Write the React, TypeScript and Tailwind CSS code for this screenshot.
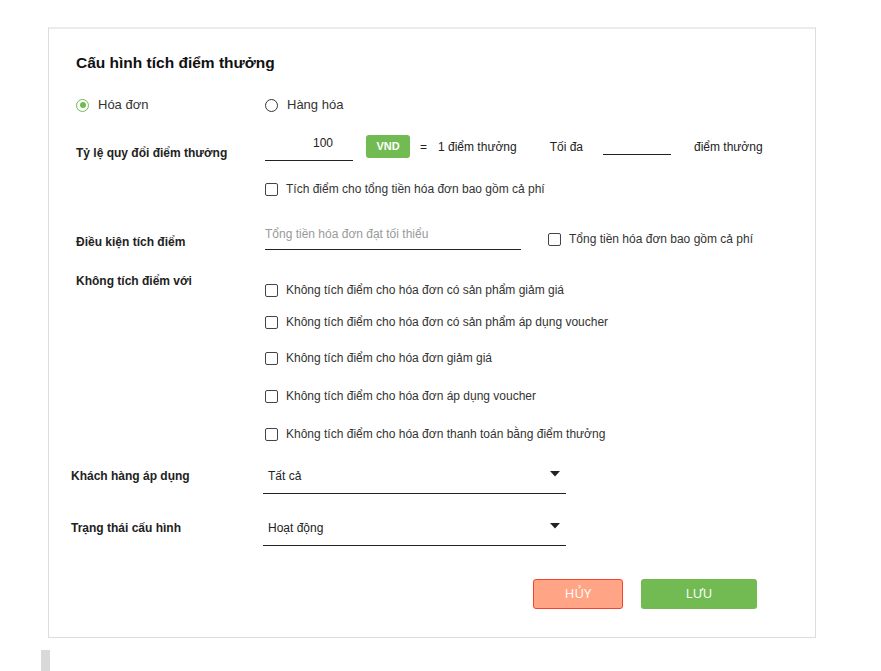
import React from "react";

const font = { fontFamily: '"Liberation Sans", Arial, sans-serif' };

function Radio({ checked, label }: { checked?: boolean; label: string }) {
  return (
    <div className="flex items-center h-5">
      <span
        className={
          "w-[13px] h-[13px] rounded-full border-[1.5px] flex items-center justify-center " +
          (checked ? "border-[#72bb53]" : "border-[#333]")
        }
      >
        {checked && <span className="w-[6px] h-[6px] rounded-full bg-[#72bb53]" />}
      </span>
      <span className="ml-[9px] text-[13px] text-[#333]">{label}</span>
    </div>
  );
}

function Check({ label, className = "" }: { label: string; className?: string }) {
  return (
    <div className={"flex items-center h-4 " + className}>
      <span className="w-[13px] h-[13px] rounded-[2px] border-[1.5px] border-[#444] shrink-0" />
      <span className="ml-2 text-[12px] text-[#333] leading-4">{label}</span>
    </div>
  );
}

function Caret() {
  return (
    <svg width="10" height="6" viewBox="0 0 10 6" className="mr-[6px] mt-[5px]">
      <polygon points="0,0 10,0 5,5.5" fill="#222" />
    </svg>
  );
}

function SelectRow({ label, value, className = "" }: { label: string; value: string; className?: string }) {
  return (
    <div className={"-ml-[5px] flex items-start " + className}>
      <div className="w-[192px] mt-[2px] text-[12px] font-bold text-[#222] leading-4">{label}</div>
      <div className="w-[303px] h-[28px] border-b border-[#222] flex items-start justify-between pl-[5px]">
        <span className="text-[12px] text-[#222] leading-4 mt-[2px]">{value}</span>
        <Caret />
      </div>
    </div>
  );
}

export default function App() {
  return (
    <div className="w-[881px] h-[671px] bg-white overflow-hidden" style={font}>
      <div className="ml-[48px] mt-[27px] w-[768px] h-[611px] border border-[#dcdcdc] border-t-2 border-t-[#ebebeb] flex flex-col pl-[27px]">
        <div className="mt-[24px] h-5 flex items-center text-[15.5px] font-bold text-[#111]">
          Cấu hình tích điểm thưởng
        </div>

        <div className="mt-[22px] flex">
          <div className="w-[189px]">
            <Radio checked label="Hóa đơn" />
          </div>
          <Radio label="Hàng hóa" />
        </div>

        <div className="mt-[20px] flex h-[26px] items-start">
          <div className="w-[189px] mt-[10px] text-[12px] font-bold text-[#222] leading-4">
            Tỷ lệ quy đổi điểm thưởng
          </div>
          <div className="w-[88px] h-[26px] border-b border-[#222] text-[12px] text-[#222] text-right pr-[20px] leading-4">
            100
          </div>
          <div className="ml-[13px] w-[44px] h-[23px] rounded-[3px] bg-[#72bb53] text-white text-[11px] font-bold flex items-center justify-center">
            VND
          </div>
          <div className="ml-[10px] mt-[4px] text-[12px] text-[#222] leading-4">=</div>
          <div className="ml-[11px] mt-[4px] text-[12px] text-[#222] leading-4">1 điểm thưởng</div>
          <div className="ml-[33px] mt-[4px] text-[12px] text-[#222] leading-4">Tối đa</div>
          <div className="ml-[20px] w-[68px] h-[20px] border-b border-[#222]" />
          <div className="ml-[23px] mt-[4px] text-[12px] text-[#222] leading-4">điểm thưởng</div>
        </div>

        <div className="mt-[20px] pl-[189px]">
          <Check label="Tích điểm cho tổng tiền hóa đơn bao gồm cả phí" />
        </div>

        <div className="mt-[28px] flex h-[26px] items-start">
          <div className="w-[189px] mt-[9px] text-[12px] font-bold text-[#222] leading-4">
            Điều kiện tích điểm
          </div>
          <div className="w-[256px] h-[25px] border-b border-[#222] text-[12px] text-[#9a9a9a] pt-[1px] leading-4">
            Tổng tiền hóa đơn đạt tối thiểu
          </div>
          <Check className="ml-[27px] mt-[6px]" label="Tổng tiền hóa đơn bao gồm cả phí" />
        </div>

        <div className="mt-[22px] flex">
          <div className="w-[189px] text-[12px] font-bold text-[#222] leading-4">
            Không tích điểm với
          </div>
          <div className="flex flex-col mt-[9px]">
            <Check label="Không tích điểm cho hóa đơn có sản phẩm giảm giá" />
            <Check className="mt-[16px]" label="Không tích điểm cho hóa đơn có sản phẩm áp dụng voucher" />
            <Check className="mt-[20px]" label="Không tích điểm cho hóa đơn giảm giá" />
            <Check className="mt-[22px]" label="Không tích điểm cho hóa đơn áp dụng voucher" />
            <Check className="mt-[22px]" label="Không tích điểm cho hóa đơn thanh toán bằng điểm thưởng" />
          </div>
        </div>

        <SelectRow className="mt-[24px]" label="Khách hàng áp dụng" value="Tất cả" />
        <SelectRow className="mt-[24px]" label="Trạng thái cấu hình" value="Hoạt động" />

        <div className="mt-[33px] flex pl-[457px] gap-[18px]" style={{ fontFamily: '"Open Sans", "Liberation Sans", sans-serif' }}>
          <div className="w-[90px] h-[30px] rounded-[3px] bg-[#ffa484] border border-[#f4442e] text-white text-[13px] flex items-center justify-center">
            HỦY
          </div>
          <div className="w-[116px] h-[30px] rounded-[3px] bg-[#72bb53] text-white text-[13px] flex items-center justify-center">
            LƯU
          </div>
        </div>
      </div>
      <div className="ml-[41px] mt-[12px] w-[9px] h-[30px] bg-[#d9d9d9]" />
    </div>
  );
}
